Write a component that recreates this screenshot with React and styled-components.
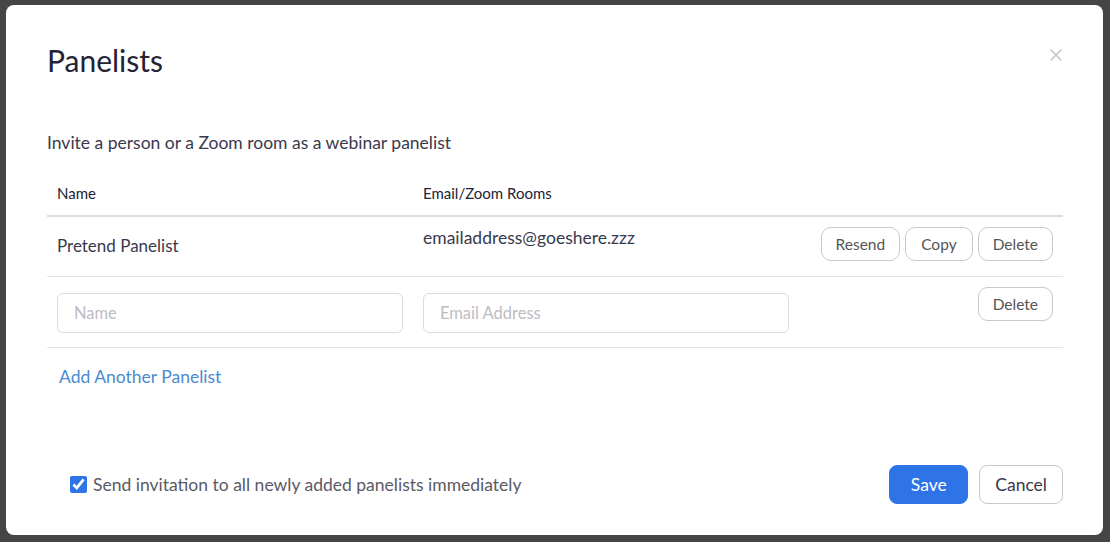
import React from 'react';
import styled, { createGlobalStyle } from 'styled-components';

const GlobalStyle = createGlobalStyle`
  * { box-sizing: border-box; }
  body {
    margin: 0;
    background: #454545;
    font-family: Lato, "Open Sans", sans-serif;
  }
`

const Backdrop = styled.div`
  width: 1110px;
  height: 542px;
  padding: 5px 7px 7px 6px;
  background: #454545;
`

const Modal = styled.div`
  position: relative;
  height: 530px;
  background: #fff;
  border-radius: 8px;
  padding: 37px 40px 31px 41px;
  display: flex;
  flex-direction: column;
  color: #232333;
`

const Title = styled.h1`
  margin: 0;
  font-size: 30px;
  line-height: 36px;
  font-weight: 400;
  color: #232333;
`

const CloseButton = styled.button`
  position: absolute;
  top: 43px;
  right: 40px;
  width: 14px;
  height: 14px;
  padding: 0;
  border: none;
  background: none;
  cursor: pointer;
  svg { display: block; }
`

const Subtitle = styled.p`
  margin: 53px 0 0 0;
  font-size: 17.5px;
  line-height: 24px;
  color: #39394d;
`

const Table = styled.div`
  margin-top: 18px;
  display: flex;
  flex-direction: column;
`

const Row = styled.div`
  display: grid;
  grid-template-columns: 366px 386px 1fr;
  padding: 10px 0 ${p => p.$pb}px;
  border-bottom: ${p => p.$head ? '2px solid #dcdcdc' : '1px solid #e4e4e4'};
`

const HeadCell = styled.div`
  padding: 0 10px;
  font-size: 15px;
  line-height: 20px;
  color: #232333;
`

const Cell = styled.div`
  padding: 0 10px;
  padding-top: ${p => p.$offset || 0}px;
  font-size: ${p => p.$size || 17.5}px;
  line-height: 20px;
  color: #39394d;
`

const Actions = styled.div`
  display: flex;
  justify-content: flex-end;
  gap: 5px;
  padding-right: 10px;
`

const SmallButton = styled.button`
  height: 34px;
  padding: 0 ${p => p.$pad || 14}px;
  border: 1px solid #c8c8c8;
  border-radius: 10px;
  background: #fff;
  font-family: Lato, sans-serif;
  font-size: 15.5px;
  color: #555;
  cursor: pointer;
`

const Input = styled.input`
  display: block;
  width: 100%;
  height: 40px;
  margin-top: 6px;
  padding: 0 16px;
  border: 1px solid #dcdcdc;
  border-radius: 6px;
  font-family: Lato, sans-serif;
  font-size: 16.5px;
  color: #39394d;
  &::placeholder { color: #bcbcc4; }
`

const AddLink = styled.a`
  margin: 17px 0 0 12px;
  font-size: 17.5px;
  line-height: 24px;
  color: #4a8ad0;
  text-decoration: none;
  cursor: pointer;
  align-self: flex-start;
`

const Footer = styled.div`
  margin-top: auto;
  display: flex;
  align-items: center;
  justify-content: space-between;
  padding-left: 23px;
`

const CheckLabel = styled.label`
  display: flex;
  align-items: center;
  gap: 6px;
  font-size: 17.5px;
  color: #5a5a66;
  input {
    width: 17px;
    height: 17px;
    margin: 0;
    accent-color: #2f74e6;
  }
`

const FooterButtons = styled.div`
  display: flex;
  gap: 11px;
`

const FooterButton = styled.button`
  height: 39px;
  min-width: ${p => p.$primary ? 79 : 83}px;
  padding: 0 15px;
  border-radius: 8px;
  border: 1px solid ${p => p.$primary ? '#2f74e6' : '#c8c8c8'};
  background: ${p => p.$primary ? '#2f74e6' : '#fff'};
  color: ${p => p.$primary ? '#fff' : '#39394d'};
  font-family: Lato, sans-serif;
  font-size: 17.5px;
  cursor: pointer;
`

export default function App() {
  return (
    <Backdrop>
      <GlobalStyle />
      <Modal>
        <Title>Panelists</Title>
        <CloseButton aria-label="Close">
          <svg width="14" height="14" viewBox="0 0 14 14">
            <path d="M1.5 1.5 L12.5 12.5 M12.5 1.5 L1.5 12.5" stroke="#c4c4c4" strokeWidth="1.5" fill="none" />
          </svg>
        </CloseButton>
        <Subtitle>Invite a person or a Zoom room as a webinar panelist</Subtitle>

        <Table>
          <Row $head $pb={12}>
            <HeadCell>Name</HeadCell>
            <HeadCell>Email/Zoom Rooms</HeadCell>
            <HeadCell />
          </Row>
          <Row $pb={15}>
            <Cell $offset={9} $size={17}>Pretend Panelist</Cell>
            <Cell $offset={1}>emailaddress@goeshere.zzz</Cell>
            <Actions>
              <SmallButton $pad={14}>Resend</SmallButton>
              <SmallButton $pad={15}>Copy</SmallButton>
              <SmallButton $pad={14}>Delete</SmallButton>
            </Actions>
          </Row>
          <Row $pb={14}>
            <Cell><Input placeholder="Name" /></Cell>
            <Cell><Input placeholder="Email Address" /></Cell>
            <Actions>
              <SmallButton $pad={14}>Delete</SmallButton>
            </Actions>
          </Row>
        </Table>

        <AddLink>Add Another Panelist</AddLink>

        <Footer>
          <CheckLabel>
            <input type="checkbox" defaultChecked />
            Send invitation to all newly added panelists immediately
          </CheckLabel>
          <FooterButtons>
            <FooterButton $primary>Save</FooterButton>
            <FooterButton>Cancel</FooterButton>
          </FooterButtons>
        </Footer>
      </Modal>
    </Backdrop>
  )
}
